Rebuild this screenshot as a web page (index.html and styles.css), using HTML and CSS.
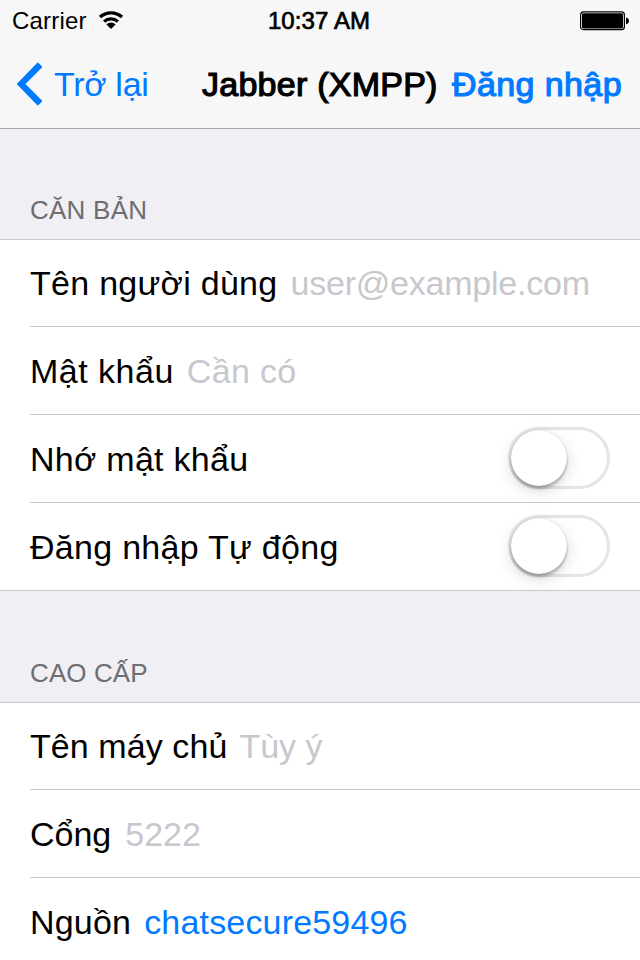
FILE: index.html
```html
<!DOCTYPE html>
<html lang="vi">
<head>
<meta charset="utf-8">
<title>Jabber (XMPP)</title>
<link rel="stylesheet" href="styles.css">
</head>
<body>
<header class="top">
  <div class="status">
    <div class="carrier"><span class="carrier-name">Carrier</span>
      <svg class="wifi" width="26" height="18" viewBox="0 0 26 18"><g fill="none" stroke="#000" stroke-width="3.3"><path d="M2 6a16.5 16.5 0 0 1 22 0"/><path d="M6.1 10.6a10.2 10.2 0 0 1 13.8 0"/></g><path d="M13 18l-4.6-4.6a6.6 6.6 0 0 1 9.2 0z"/></svg>
    </div>
    <div class="time">10:37 AM</div>
    <svg class="battery" width="50" height="20" viewBox="0 0 50 20"><rect x=".6" y=".9" width="43.8" height="17.8" rx="3" fill="none" stroke="#000" stroke-width="1.2"/><rect x="2" y="2.2" width="41" height="15.2" rx="1.4"/><path d="M46 6.4q3 .6 3 3.4t-3 3.4z"/></svg>
  </div>
  <nav class="nav">
    <a class="back"><svg width="26" height="44" viewBox="0 0 26 44"><path d="M22.3.8L26 4.5V5.5L9.5 22 26 38.5v1L22.3 43.2h-1L.7 22 21.3.8z"/></svg><span class="back-label">Trở lại</span></a>
    <h1 class="title">Jabber (XMPP)</h1>
    <a class="login">Đăng nhập</a>
  </nav>
</header>
<main>
  <h2 class="heading">CĂN BẢN</h2>
  <section class="group">
    <div class="row"><span class="label l-user">Tên người dùng</span><span class="hint h-user">user@example.com</span></div>
    <div class="row"><span class="label l-pass">Mật khẩu</span><span class="hint h-pass">Cần có</span></div>
    <div class="row"><span class="label l-remember">Nhớ mật khẩu</span><span class="switch"><span class="knob"></span></span></div>
    <div class="row"><span class="label l-auto">Đăng nhập Tự động</span><span class="switch"><span class="knob"></span></span></div>
  </section>
  <h2 class="heading advanced">CAO CẤP</h2>
  <section class="group">
    <div class="row"><span class="label l-host">Tên máy chủ</span><span class="hint h-host">Tùy ý</span></div>
    <div class="row"><span class="label l-port">Cổng</span><span class="hint h-port">5222</span></div>
    <div class="row"><span class="label l-res">Nguồn</span><span class="value">chatsecure59496</span></div>
  </section>
</main>
</body>
</html>
```
FILE: styles.css
```css
* { box-sizing: border-box; }
html, body { margin: 0; height: 960px; overflow: hidden; }
body { width: 640px; background: #efeff4; color: #000; font-family: "Liberation Sans", Arial, sans-serif; font-size: 34px; }
h1, h2 { margin: 0; }
span, a, h1, h2, .time { white-space: nowrap; }
.top { height: 129px; background: #f7f7f7; border-bottom: 1px solid #a9a9ab; }
.status { height: 40px; display: grid; grid-template-columns: 1fr auto 1fr; align-items: center; padding: 0 10px 0 12px; font-size: 24px; }
.carrier { display: flex; align-items: center; gap: 11px; }
.carrier-name { letter-spacing: .2px; padding-top: 2px; }
.time { font-size: 24px; padding: 2px 4px 0 0; letter-spacing: .1px; -webkit-text-stroke: .7px #000; }
.battery { justify-self: end; margin-top: 1px; }
.nav { height: 88px; display: flex; align-items: center; line-height: 88px; padding: 0 0 0 16px; }
.back { display: flex; align-items: center; gap: 12px; width: 186px; color: #007aff; fill: #007aff; }
.back-label { letter-spacing: -.3px; }
.title { width: 250px; font-size: 34px; font-weight: normal; letter-spacing: .25px; -webkit-text-stroke: 1.2px #000; }
.login { color: #007aff; letter-spacing: .4px; -webkit-text-stroke: 1.2px #007aff; }
.heading { height: 110px; padding: 67px 0 0 30px; line-height: 28px; font-size: 26px; font-weight: normal; letter-spacing: .25px; color: #6d6d72; }
.advanced { height: 111px; padding-top: 68px; letter-spacing: .1px; }
.group { background: #fff; border-top: 1px solid #c8c7cc; border-bottom: 1px solid #c8c7cc; }
.row { display: flex; align-items: center; height: 88px; margin-left: 30px; padding-right: 30px; border-bottom: 1px solid #c8c7cc; }
.row:first-child { height: 87px; }
.row:last-child { border-bottom: 0; height: 87px; }
.row:not(:first-child) .label, .row:not(:first-child) .hint, .value { padding-top: 2px; }
.hint, .value { margin-left: 13px; }
.hint { color: #c7c7cd; }
.value { color: #007aff; letter-spacing: .17px; }
.l-user, .l-remember, .l-auto { letter-spacing: .28px; }
.l-pass { letter-spacing: .5px; }
.l-host { letter-spacing: .08px; }
.l-res { letter-spacing: .2px; }
.h-user { letter-spacing: -.22px; }
.h-pass { letter-spacing: .3px; }
.h-host { margin-left: 12px; }
.h-port { margin-left: 14px; }
.switch { width: 102px; height: 62px; margin: 0 0 2px auto; border: 3px solid #e5e5e5; border-radius: 31px; }
.knob { display: block; width: 56px; height: 56px; border-radius: 50%; background: #fff; box-shadow: 0 3px 3px rgba(0,0,0,.25), 0 5px 16px rgba(0,0,0,.15), 0 0 1px rgba(0,0,0,.3); }
```
